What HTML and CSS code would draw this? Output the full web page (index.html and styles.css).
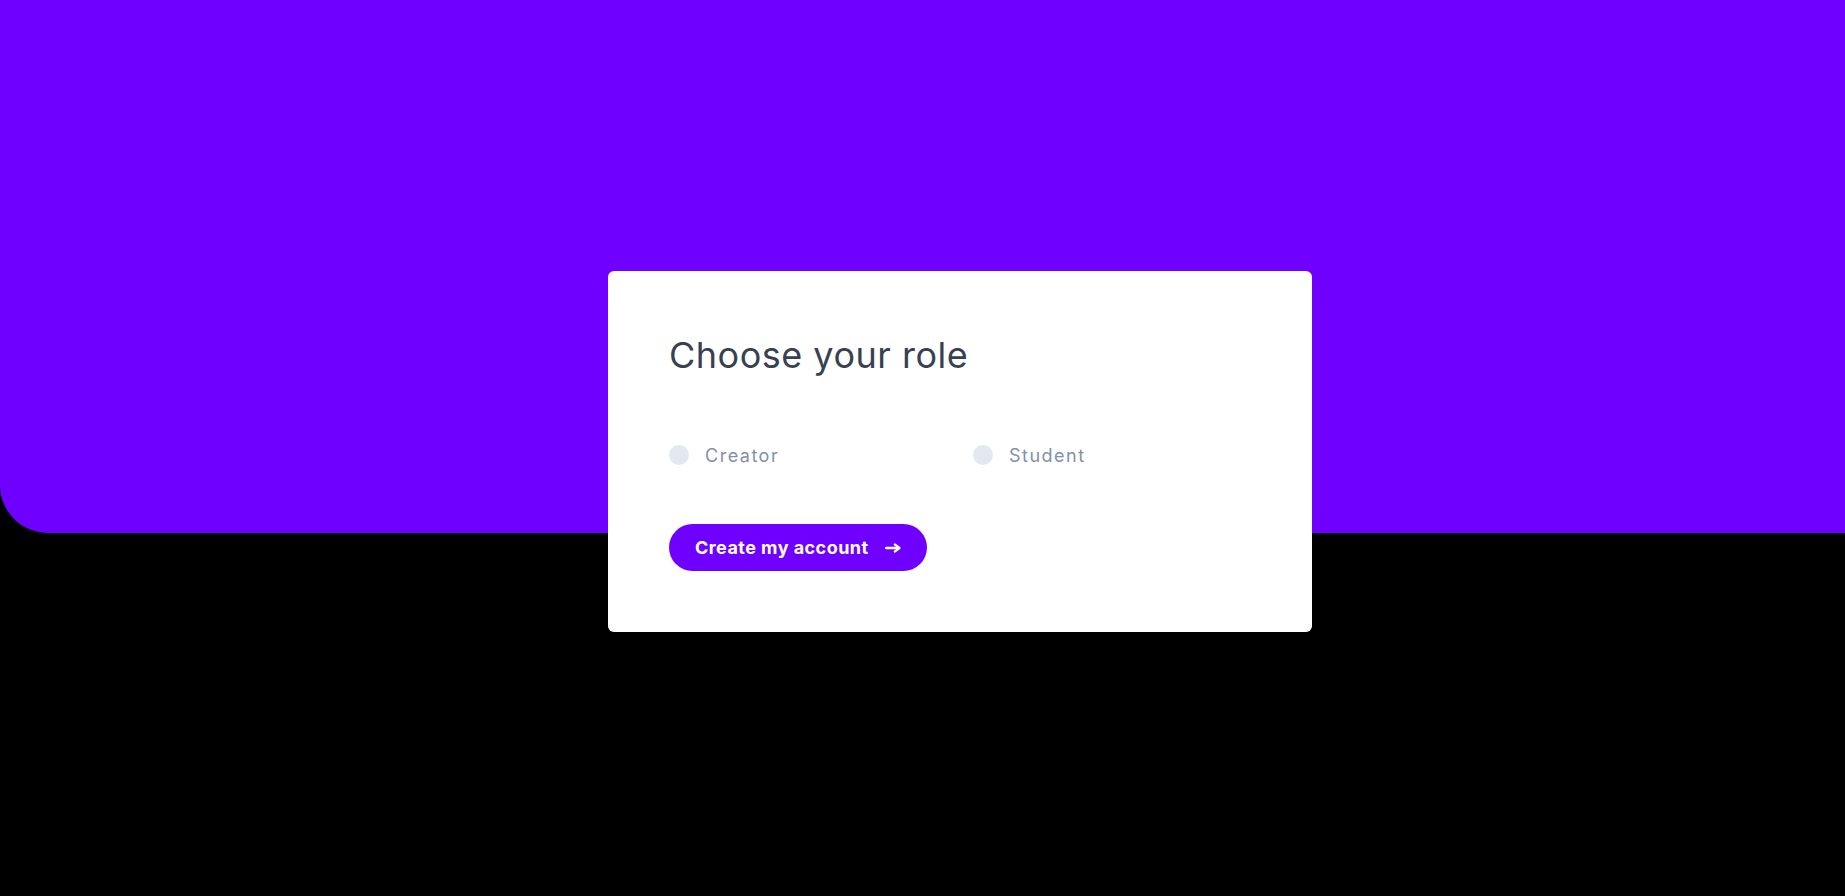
FILE: index.html
```html
<!DOCTYPE html>
<html lang="en">
<head>
<meta charset="utf-8">
<title>Choose your role</title>
<link rel="stylesheet" href="styles.css">
</head>
<body>
<div class="hero"></div>
<main class="main">
  <section class="card">
    <h1 class="title">Choose your role</h1>
    <div class="roles">
      <label class="role"><span class="radio"></span><span class="role-label">Creator</span></label>
      <label class="role"><span class="radio"></span><span class="role-label">Student</span></label>
    </div>
    <button class="btn" type="button">
      <span>Create my account</span>
      <svg class="arrow" width="16" height="10" viewBox="0 0 16 10" aria-hidden="true">
        <path d="M1.2 5h12.5" fill="none" stroke="#fff" stroke-width="2.6" stroke-linecap="round"/>
        <path d="M10 1.6 14.4 5 10 8.4" fill="none" stroke="#fff" stroke-width="2.4" stroke-linecap="round" stroke-linejoin="round"/>
      </svg>
    </button>
  </section>
</main>
</body>
</html>
```

FILE: styles.css
```css
* { box-sizing: border-box; }
html, body { margin: 0; padding: 0; }
body {
  background: #000;
  font-family: Inter, "Noto Sans", sans-serif;
  min-height: 896px;
}
.hero {
  height: 533px;
  background: #6f00ff;
  border-bottom-left-radius: 48px;
}
.main {
  margin-top: -262px;
  display: flex;
  justify-content: center;
  padding-left: 75px;
}
.card {
  width: 704px;
  height: 361px;
  background: #fff;
  border-radius: 6px;
  padding: 62px 61px 61px;
}
.title {
  margin: 0;
  font-size: 36px;
  font-weight: 400;
  line-height: 44px;
  color: #374151;
  letter-spacing: 0.5px;
}
.roles {
  display: grid;
  grid-template-columns: 304px 1fr;
  margin-top: 66px;
}
.role {
  display: flex;
  align-items: center;
  gap: 16px;
  height: 24px;
}
.radio {
  width: 20px;
  height: 20px;
  border-radius: 50%;
  background: #e2e8f0;
  flex: none;
}
.role-label {
  font-size: 18px;
  color: #8391a7;
  letter-spacing: 1.5px;
}
.btn {
  margin-top: 57px;
  display: inline-flex;
  align-items: center;
  gap: 16px;
  height: 47px;
  padding: 0 26px;
  border: 0;
  border-radius: 24px;
  background: #6f00ff;
  color: #fff;
  font-family: Inter, "Noto Sans", sans-serif;
  font-size: 18px;
  font-weight: 700;
  letter-spacing: 0.45px;
}
.arrow { display: block; }
```
